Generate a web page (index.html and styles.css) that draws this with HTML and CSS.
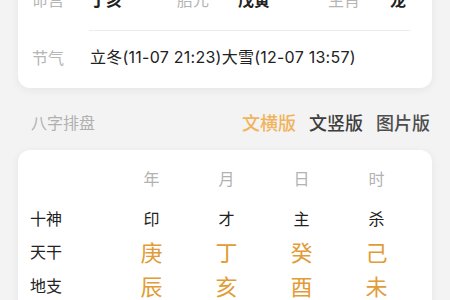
FILE: index.html
```html
<!DOCTYPE html>
<html lang="zh">
<head>
<meta charset="utf-8">
<link rel="stylesheet" href="styles.css">
</head>
<body>
<div class="page">
  <section class="card info">
    <div class="info-grid">
      <span class="lbl">命宫</span><span class="val">丁亥</span>
      <span class="lbl">胎元</span><span class="val">戊寅</span>
      <span class="lbl">生肖</span><span class="val">龙</span>
    </div>
    <div class="divider"></div>
    <div class="jieqi">
      <span class="lbl jq-lbl">节气</span>
      <span class="jq-val">立冬(11-07 21:23)大雪(12-07 13:57)</span>
    </div>
  </section>

  <div class="sec-head">
    <span class="sec-title">八字排盘</span>
    <div class="tabs">
      <span class="tab active">文横版</span>
      <span class="tab">文竖版</span>
      <span class="tab alt">图片版</span>
    </div>
  </div>

  <section class="card bazi">
    <div class="brow head">
      <span></span><span>年</span><span>月</span><span>日</span><span>时</span>
    </div>
    <div class="brow shen">
      <span class="rlbl">十神</span><span>印</span><span>才</span><span>主</span><span>杀</span>
    </div>
    <div class="brow big">
      <span class="rlbl">天干</span><span>庚</span><span>丁</span><span>癸</span><span>己</span>
    </div>
    <div class="brow big">
      <span class="rlbl">地支</span><span>辰</span><span>亥</span><span>酉</span><span>未</span>
    </div>
  </section>
</div>
</body>
</html>
```

FILE: styles.css
```css
html, body {
  margin: 0;
  padding: 0;
  background: #f3f3f3;
  width: 450px;
  height: 300px;
  overflow: hidden;
  font-family: "Noto Sans CJK SC", "Noto Sans", sans-serif;
}

.page {
  display: flex;
  flex-direction: column;
  padding: 0 18px;
}

.card {
  background: #ffffff;
  border-radius: 12px;
  box-shadow: 0 2px 10px rgba(0, 0, 0, 0.06);
}

.info {
  margin-top: -31px;
  padding: 18px 22px 19px 14px;
}

.info-grid {
  display: grid;
  grid-template-columns: 58px 87px 61px 90px 62px auto;
  height: 24px;
  align-items: center;
  font-size: 16px;
  line-height: 24px;
}

.lbl {
  color: #b5b5b5;
}

.val {
  color: #222;
  font-weight: 700;
}

.divider {
  height: 1px;
  background: #ececec;
  margin: 19px 0 0 57px;
}

.jieqi {
  display: flex;
  align-items: center;
  height: 24px;
  margin-top: 14px;
  font-size: 16px;
  line-height: 24px;
}

.jq-lbl {
  width: 58px;
  flex: none;
}

.jq-val {
  color: #222;
  font-family: "Inter", "Noto Sans CJK SC", sans-serif;
  letter-spacing: 0.25px;
}

.sec-head {
  display: flex;
  justify-content: space-between;
  align-items: center;
  height: 26px;
  margin: 21px 2px 15px 13px;
}

.sec-title {
  color: #b0b0b0;
  font-size: 16px;
}

.tabs {
  display: flex;
  gap: 13px;
  font-size: 18px;
  font-weight: 500;
}

.tab {
  color: #3e3e3e;
}

.tab.alt {
  color: #4e4e4e;
}

.tab.active {
  color: #f1b35d;
}

.bazi {
  padding: 16px 0 10px 12px;
}

.brow {
  display: grid;
  grid-template-columns: 84px repeat(4, 75px);
  align-items: center;
}

.brow span {
  text-align: center;
}

.brow .rlbl {
  text-align: left;
  font-size: 16px;
  color: #222;
}

.head {
  height: 24px;
  margin-bottom: 12px;
  color: #b2b2b2;
  font-size: 16px;
}

.shen {
  height: 32px;
  color: #222;
  font-size: 16px;
}

.big {
  height: 34px;
  color: #e29b36;
  font-size: 22px;
}
```
